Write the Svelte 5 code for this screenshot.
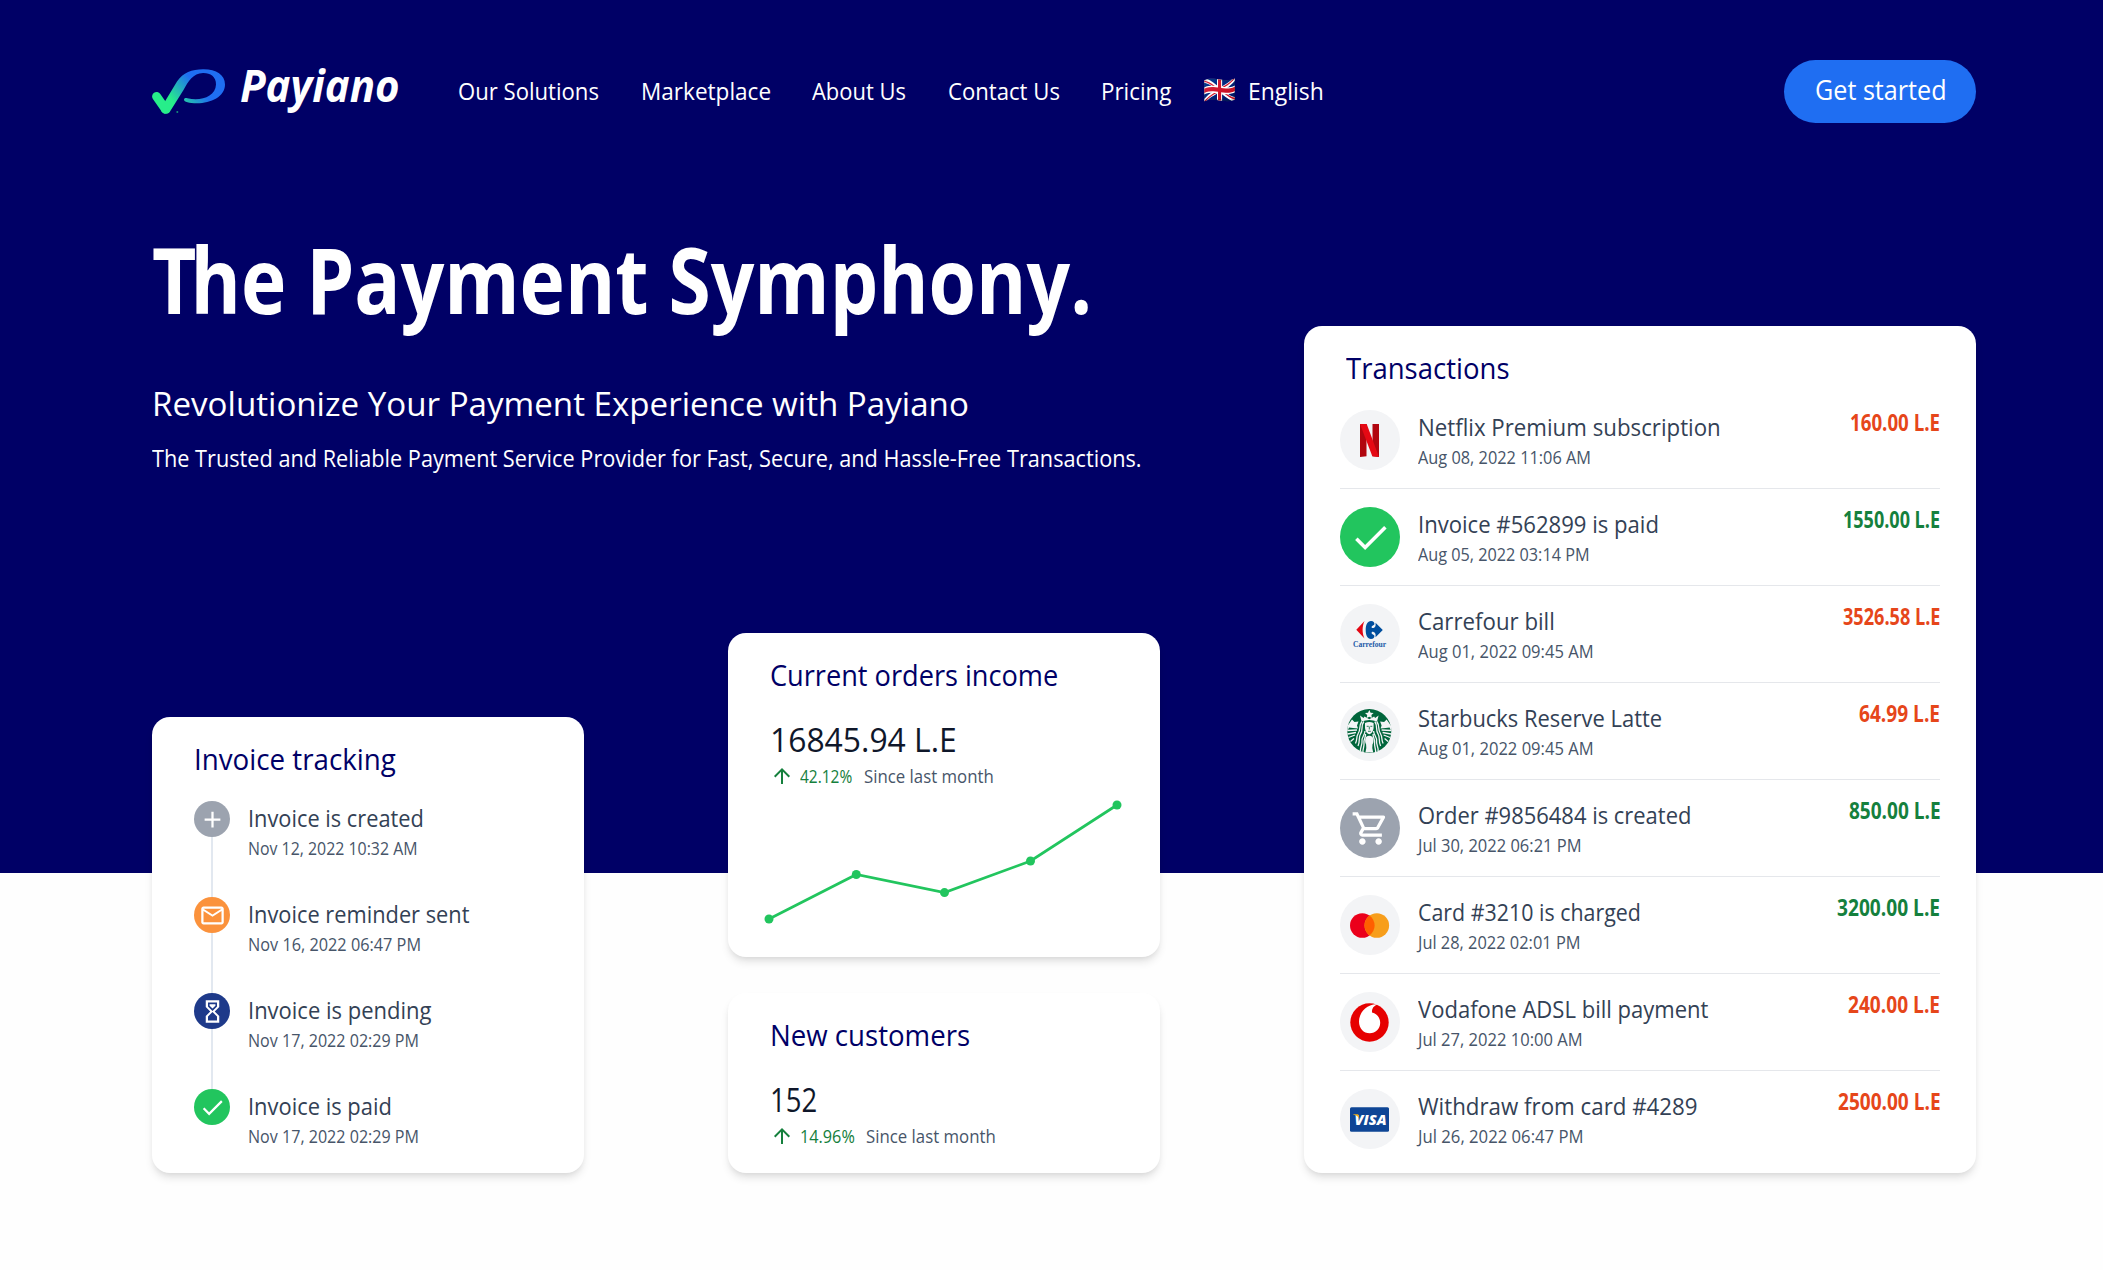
<script>
  const nav = [
    { label: 'Our Solutions', w: 140 },
    { label: 'Marketplace', w: 129 },
    { label: 'About Us', w: 93 },
    { label: 'Contact Us', w: 111 },
    { label: 'Pricing', w: 70 }
  ];

  const steps = [
    { title: 'Invoice is created', w: 174, date: 'Nov 12, 2022 10:32 AM', dw: 168, kind: 'plus' },
    { title: 'Invoice reminder sent', w: 221, date: 'Nov 16, 2022 06:47 PM', dw: 171.5, kind: 'mail' },
    { title: 'Invoice is pending', w: 183, date: 'Nov 17, 2022 02:29 PM', dw: 169.5, kind: 'glass' },
    { title: 'Invoice is paid', w: 142, date: 'Nov 17, 2022 02:29 PM', dw: 169.5, kind: 'check' }
  ];

  const icons = {
    plus: 'M19 13h-6v6h-2v-6H5v-2h6V5h2v6h6z',
    mail: 'M22 6c0-1.1-.9-2-2-2H4c-1.1 0-2 .9-2 2v12c0 1.1.9 2 2 2h16c1.1 0 2-.9 2-2V6zm-2 0-8 5-8-5h16zm0 12H4V8l8 5 8-5v10z',
    glass: 'M6 2v6l4 4-4 4v6h12v-6l-4-4 4-4V2H6zm10 14.5V20H8v-3.5l4-4 4 4zm-4-5-4-4V4h8v3.5l-4 4zM9.4 5.6h5.2v1.2L12 9.4 9.4 6.8z',
    check: 'M9 16.17 4.83 12l-1.42 1.41L9 19 21 7l-1.41-1.41z',
    cart: 'M15.55 13c.75 0 1.41-.41 1.75-1.03l3.58-6.49A.996.996 0 0 0 20.01 4H5.21l-.94-2H1v2h2l3.6 7.59-1.35 2.44C4.52 15.37 5.48 17 7 17h12v-2H7l1.1-2h7.45zM6.16 6h12.15l-2.76 5H8.53L6.16 6zM7 18c-1.1 0-1.99.9-1.99 2S5.9 22 7 22s2-.9 2-2-.9-2-2-2zm10 0c-1.1 0-1.99.9-1.99 2s.89 2 1.99 2 2-.9 2-2-.9-2-2-2z',
    up: 'm4 12 1.41 1.41L11 7.83V20h2V7.83l5.58 5.59L20 12l-8-8z'
  };

  const rows = [
    { brand: 'netflix', title: 'Netflix Premium subscription', w: 301, date: 'Aug 08, 2022 11:06 AM', dw: 171.5, amount: '160.00 L.E', aw: 89 },
    { brand: 'check', title: 'Invoice #562899 is paid', w: 239, date: 'Aug 05, 2022 03:14 PM', dw: 170, amount: '1550.00 L.E', aw: 96, credit: true },
    { brand: 'carrefour', title: 'Carrefour bill', w: 135, date: 'Aug 01, 2022 09:45 AM', dw: 174, amount: '3526.58 L.E', aw: 96.5 },
    { brand: 'starbucks', title: 'Starbucks Reserve Latte', w: 243, date: 'Aug 01, 2022 09:45 AM', dw: 174, amount: '64.99 L.E', aw: 80 },
    { brand: 'cart', title: 'Order #9856484 is created', w: 271.5, date: 'Jul 30, 2022 06:21 PM', dw: 162, amount: '850.00 L.E', aw: 90.5, credit: true },
    { brand: 'mastercard', title: 'Card #3210 is charged', w: 221, date: 'Jul 28, 2022 02:01 PM', dw: 161, amount: '3200.00 L.E', aw: 102, credit: true },
    { brand: 'vodafone', title: 'Vodafone ADSL bill payment', w: 290, date: 'Jul 27, 2022 10:00 AM', dw: 163, amount: '240.00 L.E', aw: 91 },
    { brand: 'visa', title: 'Withdraw from card #4289', w: 278.5, date: 'Jul 26, 2022 06:47 PM', dw: 164, amount: '2500.00 L.E', aw: 101.5 }
  ];

  const points = [
    [41, 131],
    [128.3, 86.5],
    [216.5, 104.6],
    [302.5, 73],
    [389, 17]
  ];

  const pen = document.createElement('canvas').getContext('2d');

  // Condenses a line of text to `w` pixels, up to the ink of its last letter.
  // Measured at ten times the size, where the bounds are precise.
  function fit(node, w) {
    const cs = getComputedStyle(node);
    pen.font = `${cs.fontStyle} ${cs.fontWeight} ${parseFloat(cs.fontSize) * 10}px ${cs.fontFamily}`;
    const m = pen.measureText(node.textContent);
    node.style.width = `${w}px`;
    node.style.transform = `scaleX(${w / (m.actualBoundingBoxRight / 10)})`;
  }
</script>

{#snippet icon(name, size)}
  <svg width={size} height={size} viewBox="0 0 24 24" fill="currentColor"><path d={icons[name]} /></svg>
{/snippet}

<div class="page">
  <header>
    <a class="logo" href="#top" aria-label="Payiano">
      <svg width="75" height="46" viewBox="0 0 75 46">
        <defs>
          <linearGradient id="brand" gradientUnits="userSpaceOnUse" x1="20" y1="32" x2="42" y2="13">
            <stop offset="0" stop-color="#27ee8a" />
            <stop offset="1" stop-color="#1f6ef2" />
          </linearGradient>
        </defs>
        <path d="M4.6 27.5 13.5 40.3" fill="none" stroke="#27ee8a" stroke-width="9" stroke-linecap="round" />
        <path
          fill="url(#brand)"
          d="M9.6 38 25 12.500C31 3.500 40 .3 51 .2 64 0 73 5.500 73 15.500 73 27.500 59 34.300 45 34.300 37 34.300 32 32.800 32 30.800 32 29 33.500 28.600 35.500 29.200 48 32.500 63.500 28 64 15.500 64.300 7.500 58 3.800 51 4 41 4.300 36.500 12 31.500 21L17.700 43C16 45.500 10.500 45 9.200 42Z"
        />
        <circle cx="25.300" cy="43" r="1" fill="#168f78" />
      </svg>
      <span class="word fit" use:fit={158}>Payiano</span>
    </a>
    <nav>
      {#each nav as n}
        <a href="#top" class="fit" use:fit={n.w}>{n.label}</a>
      {/each}
    </nav>
    <div class="lang"><span class="flag">🇬🇧</span><span class="fit" use:fit={74}>English</span></div>
    <button><span class="fit" use:fit={129.500}>Get started</span></button>
  </header>

  <main>
    <section class="hero">
      <h1 class="fit" use:fit={942}><span class="tight">T</span>he Payment Symphony.</h1>
      <h2 class="fit" use:fit={815}>Revolutionize Your Payment Experience with Payiano</h2>
      <p class="fit" use:fit={988}>The Trusted and Reliable Payment Service Provider for Fast, Secure, and Hassle-Free Transactions.</p>
    </section>

    <section class="card tracking">
      <h3 class="fit" use:fit={201.500}>Invoice tracking</h3>
      <ol>
        {#each steps as s}
          <li>
            <span class="rail"><span class="dot {s.kind}">{@render icon(s.kind, 27)}</span></span>
            <span class="copy">
              <span class="title fit" use:fit={s.w}>{s.title}</span>
              <span class="date fit" use:fit={s.dw}>{s.date}</span>
            </span>
          </li>
        {/each}
      </ol>
    </section>

    <div class="stack">
      <section class="card stat">
        <h3 class="fit" use:fit={287}>Current orders income</h3>
        <div class="figure fit" use:fit={185}>16845.94 L.E</div>
        <div class="trend">
          {@render icon('up', 24)}
          <span class="up fit" use:fit={51.500}>42.12%</span>
          <span class="fit" use:fit={128.500}>Since last month</span>
        </div>
        <svg class="chart" width="432" height="168" viewBox="0 1 432 168">
          <polyline points={points.map((p) => p.join(',')).join(' ')} />
          {#each points as [x, y]}
            <circle cx={x} cy={y} r="4.500" />
          {/each}
        </svg>
      </section>
      <section class="card stat">
        <h3 class="fit" use:fit={199}>New customers</h3>
        <div class="figure fit" use:fit={46}>152</div>
        <div class="trend">
          {@render icon('up', 24)}
          <span class="up fit" use:fit={54}>14.96%</span>
          <span class="fit" use:fit={128.500}>Since last month</span>
        </div>
      </section>
    </div>

    <section class="card transactions">
      <h3 class="fit" use:fit={162.500}>Transactions</h3>
      <ul>
        {#each rows as r}
          <li>
            <span class="badge {r.brand}">
              {#if r.brand === 'check'}
                {@render icon('check', 43)}
              {:else if r.brand === 'cart'}
                {@render icon('cart', 39)}
              {:else}
                <svg width="60" height="60" viewBox="0 0 60 60">
                  {#if r.brand === 'netflix'}
                    <path fill="#b1060f" d="M20 14h6.500v32.200l-6.500.8zM32.500 14H39v33l-6.500-.8z" />
                    <path fill="#e50914" d="M20 14h6.700L39 47l-6.700-.8z" />
                  {:else if r.brand === 'carrefour'}
                    <path fill="#e30613" d="M24.500 17 16.300 25.800 24.500 34.500C22 29 22 22.500 24.500 17z" />
                    <path fill="#004e9e" d="M31 17C27.500 17 25.700 20.500 25.700 26S27.500 35 31 35C33.500 35 34.600 33.500 34.400 31.800 34 30.300 32 30.700 31.600 29.300 31.400 28 32.500 27.500 33.500 28 35 28.500 36 29.500 35.500 33.200L42.800 26 35.500 18.800C36 22.500 35 23.500 33.500 24 32.500 24.300 31.400 24 31.600 22.700 32 21.300 34 21.700 34.400 20.200 34.600 18.500 33.500 17 31 17z" />
                    <text x="13" y="43.300" textLength="33" lengthAdjust="spacingAndGlyphs" class="carrefour-name">Carrefour</text>
                  {:else if r.brand === 'starbucks'}
                    <circle cx="29.300" cy="30" r="22" fill="#00653b" />
                    <g fill="#f3f4f6">
                      <path d="m29.300 9 1.300 2.700 3 .4-2.200 2 .5 2.900-2.600-1.300-2.600 1.300.5-2.900-2.200-2 3-.4z" />
                      <path d="M20 14.500 23.500 17 24.500 15.500 29.300 18.300 34.100 15.500 35.100 17 38.600 14.500 37 20.500Q29.300 17.500 21.600 20.500z" />
                      <path d="M25 22Q29.300 19.800 33.600 22V27Q33 32.500 29.300 33.300 25.600 32.500 25 27z" />
                      <path d="M26 36Q29.300 33.500 32.600 36 34.500 40 32.500 43.500 31.700 47 33.200 51.500H25.400Q26.900 47 26.100 43.500 24.100 40 26 36z" />
                      <path d="M12 18.500 14.500 21 18.500 20.500 17 24.500 18 27.500 13 27 9 26.500 7.500 30V25zM46.600 18.500 44.100 21 40.100 20.500 41.600 24.500 40.600 27.500 45.600 27 49.600 26.500 51.100 30V25z" />
                    </g>
                    <g fill="none" stroke="#f3f4f6" stroke-width="1.300">
                      <path d="M23.800 20.500C20.500 25 23.500 29 20.500 33 18 37 20.500 40 18 45M21.800 20.500C18.500 25 21 28.500 18.200 32.500 16 36 17.500 38.500 15.500 42.500M25 30C25 34 21.500 36 22 40 22.500 44 20 46 20.500 50M25.500 33C26 36 23.500 38 24 42 24.500 46 22.500 48 23 51.500" />
                      <path d="M34.800 20.500C38.100 25 35.100 29 38.100 33 40.600 37 38.100 40 40.600 45M36.800 20.500C40.100 25 37.600 28.500 40.400 32.500 42.600 36 41.100 38.500 43.100 42.500M33.600 30C33.600 34 37.100 36 36.600 40 36.100 44 38.600 46 38.100 50M33.100 33C32.600 36 35.100 38 34.600 42 34.100 46 36.100 48 35.600 51.500" />
                      <path d="M7.300 29.500 17 29M7.500 33 16 31.500M8.500 36.500 15 34M10.500 40.500 14 37.500M51.300 29.500 41.600 29M51.100 33 42.600 31.500M50.100 36.500 43.600 34M48.100 40.500 44.600 37.500" />
                    </g>
                    <path d="M26.700 25.300h2M30.300 25.300h2M28 30.300h2.800M29.300 25.500v3" fill="none" stroke="#00653b" stroke-width=".8" />
                  {:else if r.brand === 'mastercard'}
                    <circle cx="22.300" cy="30.500" r="12.300" fill="#eb001b" />
                    <circle cx="36.800" cy="30.500" r="12.300" fill="#f79e1b" />
                    <path fill="#ff5f00" d="M29.550 20.560a12.300 12.300 0 0 1 0 19.880 12.300 12.300 0 0 1 0-19.880z" />
                  {:else if r.brand === 'vodafone'}
                    <circle cx="29.500" cy="30.500" r="19.200" fill="#e60000" />
                    <path fill="#fff" d="M38.500 12.300C33 13.500 31.800 17.500 32 20.500 37 21.500 40.200 26 40.200 30.800 40.200 37 35.500 41.300 29.800 41.300 23.500 41.300 19 36.500 19 29.500 19 20.500 27 11 38.500 12.300z" />
                  {:else}
                    <rect x="10" y="18.300" width="39" height="24.500" rx="1.500" fill="#0e4595" />
                    <text x="14.500" y="36" textLength="32" lengthAdjust="spacingAndGlyphs" class="visa-name">VISA</text>
                    <path fill="#f2ae14" d="M13 25.300h4.300c.9 0 1.300.4 1.500 1.200l.7 3.500c-1-2.300-3.300-3.900-6.500-4.500z" />
                  {/if}
                </svg>
              {/if}
            </span>
            <span class="copy">
              <span class="title fit" use:fit={r.w}>{r.title}</span>
              <span class="date fit" use:fit={r.dw}>{r.date}</span>
            </span>
            <span class="amount fit" class:credit={r.credit} use:fit={r.aw}>{r.amount}</span>
          </li>
        {/each}
      </ul>
    </section>
  </main>
</div>

<style>
  :global(body) {
    margin: 0;
    background: #fff;
  }
  .page {
    box-sizing: border-box;
    width: 2103px;
    height: 1270px;
    padding: 60px 127px 0 152px;
    overflow: hidden;
    font-family: 'Open Sans', 'Noto Sans', sans-serif;
    font-weight: 450;
    font-size: 23px;
    color: #fff;
    background: linear-gradient(#000066 873px, #fefefe 873px);
  }
  .fit {
    display: block;
    flex: none;
    white-space: nowrap;
    transform-origin: 0 50%;
  }
  h1, h2, h3, p, ol, ul {
    margin: 0;
    padding: 0;
    list-style: none;
  }
  svg {
    display: block;
    flex: none;
  }
  a {
    color: inherit;
    text-decoration: none;
  }

  header {
    display: flex;
    align-items: center;
    height: 63px;
  }
  .logo {
    display: flex;
    gap: 13px;
    margin-right: 60px;
  }
  .word {
    font-size: 44px;
    line-height: 46px;
    font-style: italic;
    font-weight: 700;
    margin-top: -7px;
  }
  nav {
    display: flex;
    gap: 42.500px;
    padding-bottom: 2px;
  }
  .lang {
    display: flex;
    align-items: center;
    gap: 13px;
    margin-left: 32px;
    padding-bottom: 2px;
  }
  .flag {
    width: 32px;
    margin-top: -4px;
    font-size: 26.600px;
    line-height: 30px;
  }
  button {
    display: flex;
    justify-content: center;
    width: 192px;
    height: 63px;
    margin-left: auto;
    padding: 12px 0 0;
    border: 0;
    border-radius: 32px;
    background: #1f6ef2;
    color: #fff;
    font: inherit;
    font-size: 26.500px;
    line-height: 36px;
    text-align: left;
  }

  main {
    display: grid;
    grid-template-columns: 432px 432px 672px;
    grid-template-rows: 1fr auto;
    column-gap: 144px;
    align-items: end;
    height: 1050px;
  }
  .hero {
    grid-column: 1 / 3;
    grid-row: 1;
    align-self: start;
    height: 352px;
    padding: 108px 0 0;
  }
  h1 {
    font-size: 91px;
    line-height: 96px;
    font-weight: 700;
  }
  .tight {
    letter-spacing: -7px;
  }
  h2 {
    margin-top: 51.500px;
    font-size: 33.500px;
    line-height: 48px;
    font-weight: 450;
  }
  .hero p {
    margin-top: 13px;
    line-height: 36px;
  }

  .card {
    box-sizing: border-box;
    border-radius: 18px;
    background: #fff;
    color: #334155;
    box-shadow: 0 6px 9px -1.500px rgba(0, 0, 0, 0.1), 0 3px 6px -3px rgba(0, 0, 0, 0.1);
  }
  h3 {
    color: #000066;
    font-size: 28.500px;
    line-height: 42px;
    font-weight: 450;
  }
  .copy {
    display: flex;
    flex-direction: column;
    align-items: flex-start;
    flex: 1;
  }
  .title {
    line-height: 34px;
  }
  .date {
    color: #475569;
    font-size: 17.500px;
    line-height: 26px;
  }

  .tracking {
    grid-column: 1;
    grid-row: 2;
    height: 456px;
    padding: 21px 42px 0;
  }
  .tracking ol {
    margin-top: 21px;
  }
  .tracking li {
    display: flex;
    gap: 18px;
    height: 96px;
  }
  .rail {
    width: 36px;
    background: linear-gradient(#e2e8f0, #e2e8f0) center / 2px 100% no-repeat;
  }
  li:last-child .rail {
    background: none;
  }
  .dot {
    display: flex;
    align-items: center;
    justify-content: center;
    height: 36px;
    border-radius: 50%;
    color: #fff;
  }
  .plus { background: #9ca3af; }
  .mail { background: #fb923c; }
  .glass { background: #1e3a8a; }
  .check { background: #22c55e; }

  .stack {
    grid-column: 2;
    grid-row: 1 / 3;
    display: grid;
    grid-template-columns: 432px;
    gap: 36px;
  }
  .stat {
    height: 324px;
    padding: 21px 0 0 42px;
  }
  .stat + .stat {
    height: 180px;
  }
  .figure {
    margin-top: 18.500px;
    color: #0f172a;
    font-size: 33.500px;
    line-height: 48px;
  }
  .trend {
    display: flex;
    color: #475569;
    font-size: 17.500px;
    line-height: 26px;
  }
  .trend svg {
    color: #15803d;
    margin-top: 1px;
  }
  .up {
    margin: 0 12px 0 6px;
    color: #15803d;
  }
  .chart {
    margin-left: -42px;
    fill: #22c55e;
  }
  .chart polyline {
    fill: none;
    stroke: #22c55e;
    stroke-width: 2.700px;
  }

  .transactions {
    grid-column: 3;
    grid-row: 1 / 3;
    height: 847px;
    padding: 21px 36px 0;
  }
  .transactions h3 {
    margin: 0 0 21px 6px;
  }
  .transactions li {
    display: flex;
    gap: 18px;
    height: 60px;
    padding-bottom: 18px;
    margin-bottom: 18px;
    border-bottom: 1px solid #e5e7eb;
  }
  .transactions li:last-child {
    border: 0;
  }
  .badge {
    display: flex;
    align-items: center;
    justify-content: center;
    width: 60px;
    height: 60px;
    border-radius: 50%;
    background: #f3f4f6;
    color: #fff;
  }
  .badge.check { background: #22c55e; }
  .badge.cart { background: #9ca3af; }
  .amount {
    margin-right: 1px;
    line-height: 25px;
    font-weight: 700;
    color: #e6461a;
  }
  .amount.credit {
    color: #15803d;
  }
  .carrefour-name {
    font: 700 7.500px 'Liberation Serif', serif;
    fill: #1d5aa8;
  }
  .visa-name {
    font: italic 800 14.500px 'Open Sans', sans-serif;
    fill: #fff;
  }
</style>
